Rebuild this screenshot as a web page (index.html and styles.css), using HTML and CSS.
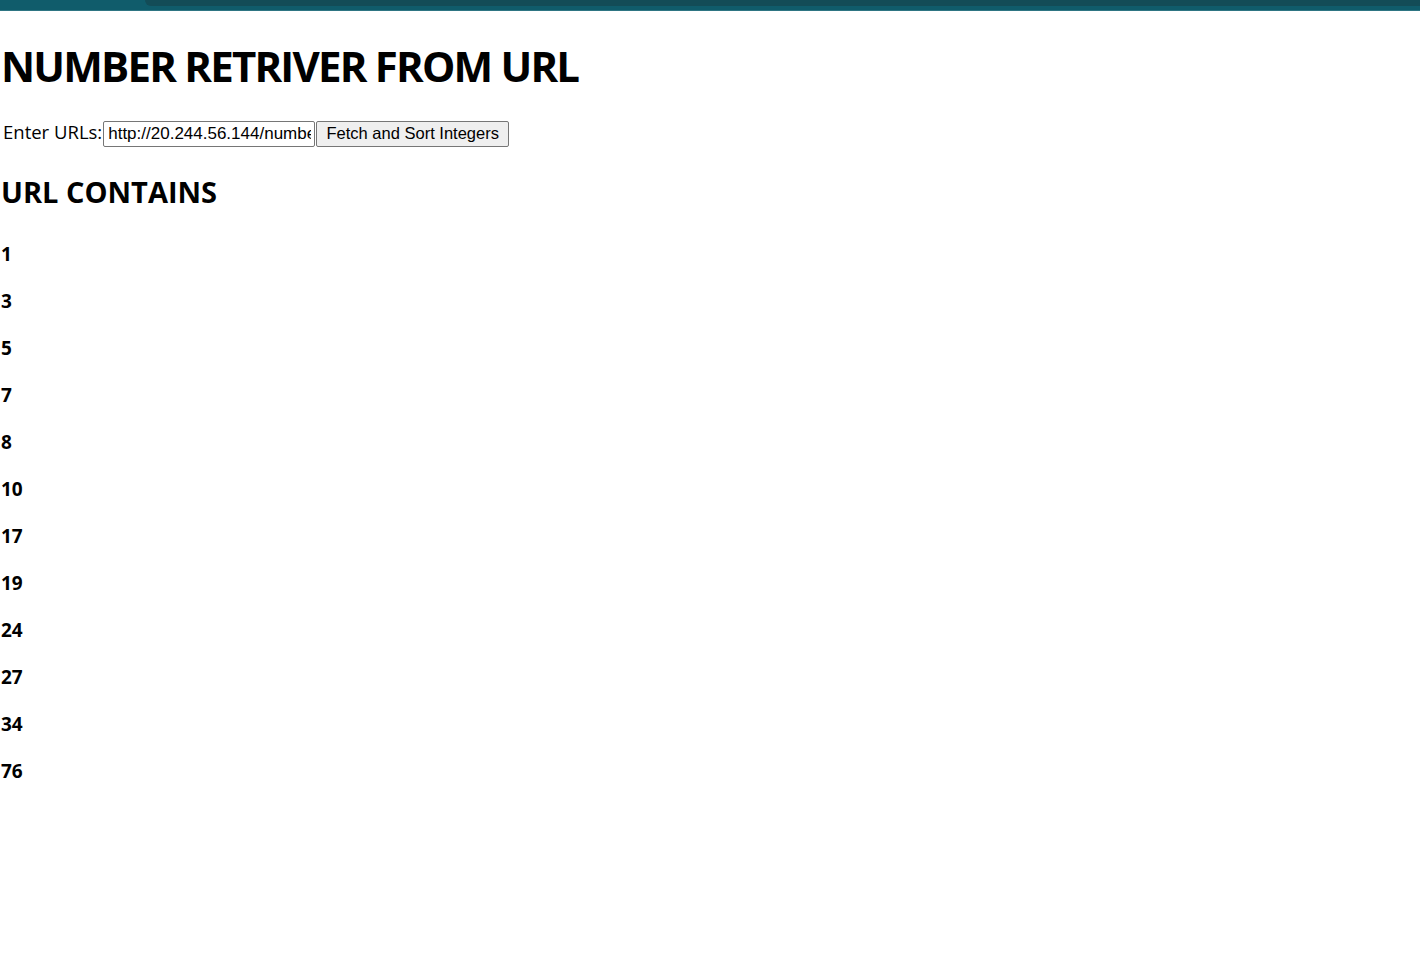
FILE: index.html
```html
<!DOCTYPE html>
<html>
<head>
<meta charset="utf-8">
<link rel="stylesheet" href="styles.css">
</head>
<body>
<div class="topbar"><div class="topbar-dark"></div></div>
<main class="page">
  <h1 class="title">NUMBER RETRIVER FROM URL</h1>
  <div class="form">
    <label class="label" for="urls">Enter URLs:</label><input id="urls" class="url-input" type="text" value="http://20.244.56.144/numbers/primes"><button class="btn">Fetch and Sort Integers</button>
  </div>
  <h2 class="subtitle">URL CONTAINS</h2>
  <ul class="numbers">
    <li>1</li><li>3</li><li>5</li><li>7</li><li>8</li><li>10</li><li>17</li><li>19</li><li>24</li><li>27</li><li>34</li><li>76</li>
  </ul>
</main>
</body>
</html>
```
FILE: styles.css
```css
html, body { margin: 0; padding: 0; background: #fff; }
body { font-family: "Open Sans", "Noto Sans", sans-serif; color: #000; }
.topbar { height: 10px; background: #105c6b; border-bottom: 1px solid #2e7583; }
.topbar-dark { margin-left: 145px; height: 6px; background: #134c57; border-bottom-left-radius: 8px; }
.page { padding: 0 1px; }
.title { font-size: 42px; font-weight: 700; margin: 26px 0 0; line-height: 58px; letter-spacing: -1.8px; }
.form { display: flex; align-items: center; margin-top: 26px; height: 26px; padding-left: 2px; }
.label { font-size: 18.5px; margin-right: 1px; padding-bottom: 5px; }
.url-input { box-sizing: border-box; width: 212px; height: 26px; font-family: "Liberation Sans", Arial, sans-serif; font-size: 17px; padding: 0 3px 0 4px; border: 1px solid #767676; border-radius: 2px; margin: 0; color: #000; }
.btn { box-sizing: border-box; width: 193px; height: 26px; margin: 0 0 0 1px; font-family: "Liberation Sans", Arial, sans-serif; font-size: 16.5px; background: #efefef; border: 1px solid #767676; border-radius: 2px; color: #000; padding: 0 0 2px; }
.subtitle { font-size: 29px; font-weight: 700; margin: 26px 0 0; line-height: 38px; letter-spacing: 0; }
.numbers { list-style: none; margin: 30px 0 0; padding: 0; display: flex; flex-direction: column; gap: 20px; }
.numbers li { font-size: 19px; font-weight: 700; line-height: 27px; }
```
